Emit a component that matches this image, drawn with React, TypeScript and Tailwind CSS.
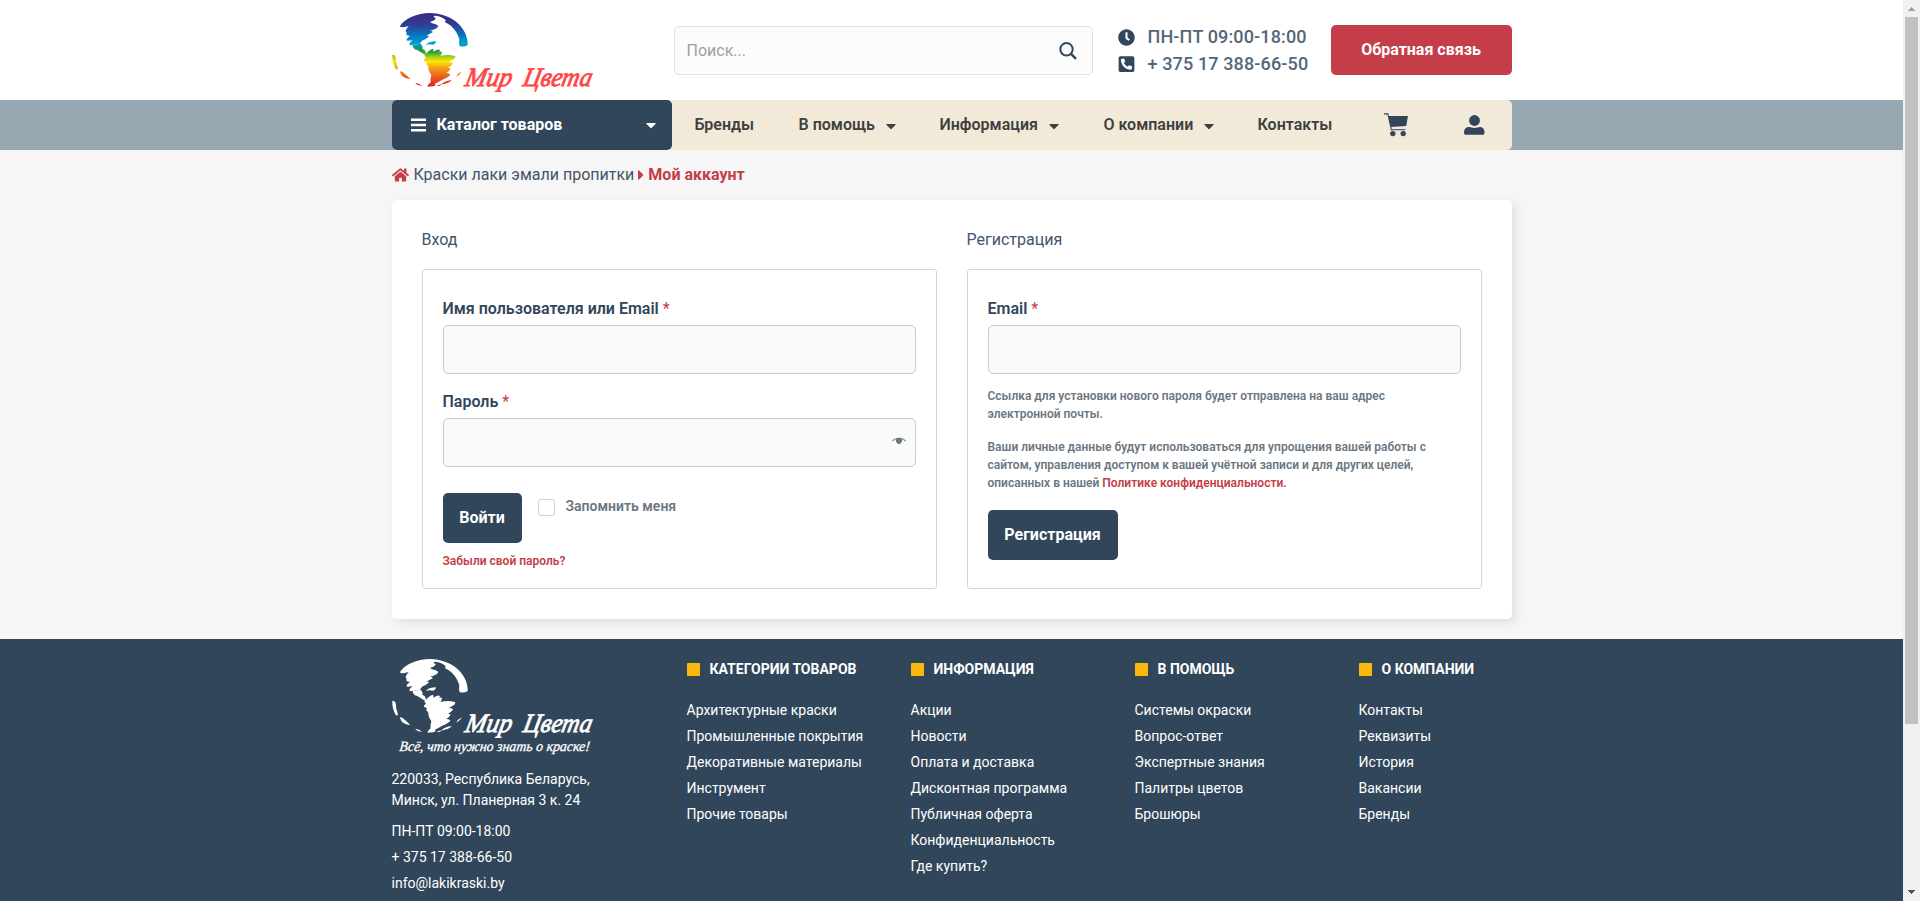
import React from "react";
import { FaCaretDown, FaCaretRight, FaClock, FaHome, FaPhoneSquareAlt } from "react-icons/fa";

function LogoArt({ id, white = false }: { id: string; white?: boolean }) {
  const fill = white ? "#ffffff" : `url(#${id})`;
  const ink = white ? "#ffffff" : "#ff4545";
  return (
    <svg
      viewBox={white ? "36 30 600 291" : "36 30 600 255"}
      className={white ? "block h-[97px] w-[200px] overflow-visible" : "block h-[85px] w-[200px] overflow-visible"}
      role="img"
    >
      <defs>
        <linearGradient id={id} gradientUnits="userSpaceOnUse" x1="0" y1="39" x2="0" y2="260">
          <stop offset="0" stopColor="#3b2c85" />
          <stop offset="0.15" stopColor="#33398f" />
          <stop offset="0.28" stopColor="#0a6ebd" />
          <stop offset="0.42" stopColor="#00a0dc" />
          <stop offset="0.49" stopColor="#0f9a4c" />
          <stop offset="0.54" stopColor="#3aa535" />
          <stop offset="0.6" stopColor="#b4cf1c" />
          <stop offset="0.66" stopColor="#ffe500" />
          <stop offset="0.75" stopColor="#f39a1c" />
          <stop offset="0.87" stopColor="#ea5b1a" />
          <stop offset="1" stopColor="#dc2020" />
        </linearGradient>
      </defs>
      <g fill={fill}>
        <path d="M60 78C75 55 110 40 150 39C205 40 245 70 258 105C262 118 264 130 263 135Q255 141 240 139Q236 136 238 118C232 95 215 75 195 67L197 60C185 50 175 47 163 47Q158 50 167 54Q168 60 150 66L156 70Q176 74 174 80Q168 88 150 92Q160 94 158 97Q152 101 138 107Q148 106 146 110Q140 116 126 122L120 131L90 136Q84 132 98 120Q80 125 79 120Q80 115 90 107Q76 108 80 98Q72 94 86 78Q60 86 60 78Z" />
        <path d="M137 134Q150 124 168 124Q168 132 160 134Q148 132 137 134Z" />
        <path d="M98 134L122 131Q130 140 127 147Q138 148 138 166Q124 158 112 150Q98 147 98 134Z" />
        <path d="M133 167Q145 150 158 146Q162 148 160 155Q175 146 180 150L178 156Q186 153 186 157L182 168Q200 163 222 167Q230 170 222 177Q215 182 206 186Q222 187 218 192Q212 200 204 203Q214 203 210 209Q205 216 198 218Q215 221 209 227Q197 236 187 239Q175 246 165 251Q168 257 160 259L142 260Q144 252 152 247Q150 238 154 226Q148 218 145 208Q148 200 138 192Q146 186 132 183Q130 177 138 173Z" />
        <path d="M37 165Q44 162 47 172Q48 190 54 205Q52 212 47 206Q36 188 37 165Z" />
        <path d="M60 214Q66 212 75 222Q86 231 91 238Q76 236 66 228Q60 220 60 214Z" />
        <path d="M106 249Q116 248 126 257Q112 257 106 249Z" />
        <path d="M183 254Q195 242 215 240Q209 249 183 254Z" />
        <path d="M168 258L184 253L180 258Z" />
        <path d="M229 231Q234 219 246 214Q241 223 229 231Z" />
      </g>
      <g
        transform="translate(0 259) skewX(-12)"
        fill={ink}
        stroke={ink}
        strokeWidth="2.5"
        fontFamily="'Liberation Serif', serif"
        fontStyle="italic"
        fontSize="80"
      >
        <text x="252" y="0" textLength="140" lengthAdjust="spacingAndGlyphs">Мир</text>
        <text x="426" y="0" textLength="206" lengthAdjust="spacingAndGlyphs">Цвета</text>
      </g>
      {white && (
        <text
          transform="translate(0 315) skewX(-6)"
          x="57"
          y="0"
          textLength="572"
          lengthAdjust="spacingAndGlyphs"
          fill="#ffffff"
          stroke="#ffffff"
          strokeWidth="1"
          fontFamily="'Liberation Serif', serif"
          fontStyle="italic"
          fontSize="43"
        >
          Всё, что нужно знать о краске!
        </text>
      )}
    </svg>
  );
}

function SearchIcon() {
  return (
    <svg viewBox="0 0 18 18" className="size-[18px]" fill="none" stroke="#31465a">
      <circle cx="7.5" cy="7.3" r="6.2" strokeWidth="2" />
      <path d="M11.8 11.6L17 16.800" strokeWidth="2.400" />
    </svg>
  );
}

function MenuIcon() {
  return (
    <svg viewBox="0 0 15 14" className="mr-[11px] h-3.5 w-[15px]" fill="#ffffff">
      <path d="M0 .5h15v2.500H0zM0 5.700h15v2.500H0zM0 11h15v2.500H0z" />
    </svg>
  );
}

function CartIcon() {
  return (
    <svg viewBox="0 0 24 24" className="h-6 w-6" fill="#31465a">
      <path d="M0 .3h4.300l.6 2.600H24l-1.800 10.200-14.900.9.5 2.200h13.600v1.100H6.900L3.400 1.400H0z" />
      <circle cx="8.800" cy="20.600" r="2.700" />
      <circle cx="19.200" cy="20.600" r="2.700" />
    </svg>
  );
}

function UserIcon() {
  return (
    <svg viewBox="0 0 21 20" className="h-5 w-[21px]" fill="#31465a">
      <circle cx="10.500" cy="5.500" r="5.400" />
      <path d="M0 17.500C0 14 2 12 5.200 12c1.800 0 2.800.9 5.300.9s3.500-.9 5.300-.9C19 12 20.500 14 20.500 17.500c0 1.500-.8 2.300-2 2.300H2c-1.300 0-2-.8-2-2.300z" />
    </svg>
  );
}

function EyeIcon() {
  return (
    <svg viewBox="0 0 14 8" className="h-2 w-3.5" fill="#6b7782">
      <path d="M0 3.700C3.500-.2 10.500-.2 14 3.700l-.6.7C11.800 3 10.800 2.300 9.900 1.900c.9 2.400-.7 5.100-2.900 5.100S3.200 4.300 4.100 1.900C3.200 2.300 2.200 3 .6 4.400z" />
    </svg>
  );
}

const navItems = [
  { label: "Бренды", cls: "w-[104px]" },
  { label: "В помощь", cls: "w-[141px]", menu: true },
  { label: "Информация", cls: "w-[164px]", menu: true },
  { label: "О компании", cls: "w-[154px]", menu: true },
  { label: "Контакты", cls: "w-[126px]" },
];

const footerColumns = [
  {
    title: "КАТЕГОРИИ ТОВАРОВ",
    links: ["Архитектурные краски", "Промышленные покрытия", "Декоративные материалы", "Инструмент", "Прочие товары"],
  },
  {
    title: "ИНФОРМАЦИЯ",
    links: ["Акции", "Новости", "Оплата и доставка", "Дисконтная программа", "Публичная оферта", "Конфиденциальность", "Где купить?"],
  },
  { title: "В ПОМОЩЬ", links: ["Системы окраски", "Вопрос-ответ", "Экспертные знания", "Палитры цветов", "Брошюры"] },
  { title: "О КОМПАНИИ", links: ["Контакты", "Реквизиты", "История", "Вакансии", "Бренды"] },
];

function Label({ children }: { children: React.ReactNode }) {
  return (
    <label className="block h-8 text-[16px] leading-8 font-semibold text-[#31465a]">
      {children} <span className="font-normal text-[#c43d48]">*</span>
    </label>
  );
}

const inputBox = "h-[49px] w-full rounded-[5px] border border-[#c5cbcb] bg-[#f9fbfa] outline-none";

function Header() {
  return (
    <header>
      <div className="h-[100px] bg-white">
        <div className="mx-auto flex h-full w-[1120px] items-start">
          <div className="w-[282px] pt-2.5">
            <LogoArt id="spectrum" />
          </div>
          <div className="mt-[26px] flex h-[49px] w-[419px] items-center justify-between rounded-[5px] border border-[#dfe2df] bg-[#fcfcfc] pr-[15px] pl-3">
            <span className="text-[16px] text-[#a0a0a0]">Поиск...</span>
            <SearchIcon />
          </div>
          <div className="mt-[22px] ml-[25px] w-[213px] text-[18px] font-medium tracking-[0.13px] text-[#536779]">
            <div className="flex h-7 items-center gap-[13px]">
              <FaClock className="mt-0.5 size-[17px] text-[#31465a]" />
              <span>ПН-ПТ 09:00-18:00</span>
            </div>
            <div className="flex h-[27px] items-center gap-[13px]">
              <FaPhoneSquareAlt className="mt-px h-[18px] w-[17px] text-[#31465a]" />
              <span>+ 375 17 388-66-50</span>
            </div>
          </div>
          <button className="mt-[25px] h-[50px] w-[181px] rounded-[5px] bg-[#c43d48] text-[16px] font-bold text-white">
            Обратная связь
          </button>
        </div>
      </div>
      <div className="h-[50px] bg-[#98a8b2]">
        <nav className="mx-auto flex h-full w-[1120px] items-center rounded-[5px] bg-[#f2ead9]">
          <div className="flex h-full w-[280px] items-center rounded-[5px] bg-[#31465a] pr-[13px] pl-[19px] text-white">
            <MenuIcon />
            <span className="text-[16px] font-bold">Каталог товаров</span>
            <FaCaretDown className="ml-auto size-4" />
          </div>
          <div className="flex h-full items-center pl-[23px] text-[16px] font-semibold text-[#404040]">
            {navItems.map((item) => (
              <div key={item.label} className={`flex items-center gap-2 ${item.cls}`}>
                {item.label}
                {item.menu && <FaCaretDown className="mt-px size-4" />}
              </div>
            ))}
          </div>
          <div className="flex items-center gap-[56px]">
            <CartIcon />
            <UserIcon />
          </div>
        </nav>
      </div>
    </header>
  );
}

function Account() {
  return (
    <main className="mx-auto w-[1120px]">
      <div className="flex h-[50px] items-center text-[16px] text-[#42556a]">
        <FaHome className="mr-[5px] h-4 w-[17px] text-[#c43d48]" />
        <span>Краски лаки эмали пропитки</span>
        <FaCaretRight className="mr-0.5 ml-0.5 h-4 w-2.5 text-[#c43d48]" />
        <span className="font-bold text-[#c43d48]">Мой аккаунт</span>
      </div>
      <section className="mb-5 flex h-[419px] gap-[30px] rounded-[5px] bg-white px-[30px] pt-[25px] shadow-[4px_4px_10px_rgba(0,0,0,0.09)]">
        <div className="w-[515px]">
          <h2 className="h-[44px] text-[16px] leading-[30px] font-normal text-[#42556a]">Вход</h2>
          <div className="h-[320px] rounded-[3px] border border-[#d3d6d9] px-5 pt-[23px]">
            <Label>Имя пользователя или Email</Label>
            <input className={inputBox} />
            <div className="pt-3">
              <Label>Пароль</Label>
              <div className={`${inputBox} flex items-center justify-end pr-[9px] pb-1`}>
                <EyeIcon />
              </div>
            </div>
            <div className="mt-[26px] flex">
              <button className="h-[50px] w-[79px] rounded-[5px] bg-[#31465a] text-[16px] font-bold text-white">Войти</button>
              <span className="mt-1.5 ml-4 size-[17px] rounded-[3px] border border-[#cfd3d8] bg-white" />
              <span className="ml-[11px] text-[14px] leading-[26px] font-semibold text-[#6b7782]">Запомнить меня</span>
            </div>
            <a className="mt-[9px] block text-[12px] leading-[18px] font-semibold text-[#c43d48]">Забыли свой пароль?</a>
          </div>
        </div>
        <div className="w-[515px]">
          <h2 className="h-[44px] text-[16px] leading-[30px] font-normal text-[#42556a]">Регистрация</h2>
          <div className="h-[320px] rounded-[3px] border border-[#d3d6d9] px-5 pt-[23px]">
            <Label>Email</Label>
            <input className={inputBox} />
            <div className="pt-[13px] text-[12px] leading-[18px] font-semibold whitespace-nowrap text-[#6b7782]">
              <p>
                Ссылка для установки нового пароля будет отправлена на ваш адрес
                <br />
                электронной почты.
              </p>
              <p className="mt-[15px]">
                Ваши личные данные будут использоваться для упрощения вашей работы с
                <br />
                сайтом, управления доступом к вашей учётной записи и для других целей,
                <br />
                описанных в нашей <a className="text-[#c43d48]">Политике конфиденциальности.</a>
              </p>
            </div>
            <button className="mt-[18px] h-[50px] w-[130px] rounded-[5px] bg-[#31465a] text-[16px] font-bold text-white">
              Регистрация
            </button>
          </div>
        </div>
      </section>
    </main>
  );
}

function Footer() {
  return (
    <footer className="h-[262px] bg-[#31465a] text-[14px] text-white">
      <div className="mx-auto flex w-[1120px]">
        <div className="w-[295px] shrink-0 pt-[17px]">
          <LogoArt id="mono" white />
          <p className="mt-4 leading-[21px]">
            220033, Республика Беларусь,
            <br />
            Минск, ул. Планерная 3 к. 24
          </p>
          <div className="mt-[7px] leading-[26px]">
            <p>ПН-ПТ 09:00-18:00</p>
            <p>+ 375 17 388-66-50</p>
            <p>info@lakikraski.by</p>
          </div>
        </div>
        {footerColumns.map((column) => (
          <div key={column.title} className="w-[224px] shrink-0 pt-5 whitespace-nowrap">
            <h3 className="flex h-5 items-center font-bold">
              <span className="mr-2.5 size-[13px] rounded-[1px] bg-[#fab80f]" />
              {column.title}
            </h3>
            <ul className="mt-[18px] leading-[26px]">
              {column.links.map((link) => (
                <li key={link}>{link}</li>
              ))}
            </ul>
          </div>
        ))}
      </div>
    </footer>
  );
}

function Scrollbar() {
  return (
    <div className="flex w-[17px] flex-col items-center bg-[#f1f1f1]">
      <svg viewBox="0 0 17 17" className="size-[17px]" fill="#a3a3a3">
        <path d="M5 11h7v-1h-1V9h-1V8H9V7H8v1H7v1H6v1H5z" />
      </svg>
      <div className="h-[707px] w-[13px] bg-[#c1c1c1]" />
      <svg viewBox="0 0 17 17" className="mt-auto size-[17px]" fill="#505050">
        <path d="M5 6h7v1h-1v1h-1v1H9v1H8V9H7V8H6V7H5z" />
      </svg>
    </div>
  );
}

export default function App() {
  return (
    <div className="flex h-[901px] w-[1920px] overflow-hidden font-['Roboto',sans-serif]">
      <div className="w-[1903px] bg-[#f6f6f6]">
        <Header />
        <Account />
        <Footer />
      </div>
      <Scrollbar />
    </div>
  );
}
